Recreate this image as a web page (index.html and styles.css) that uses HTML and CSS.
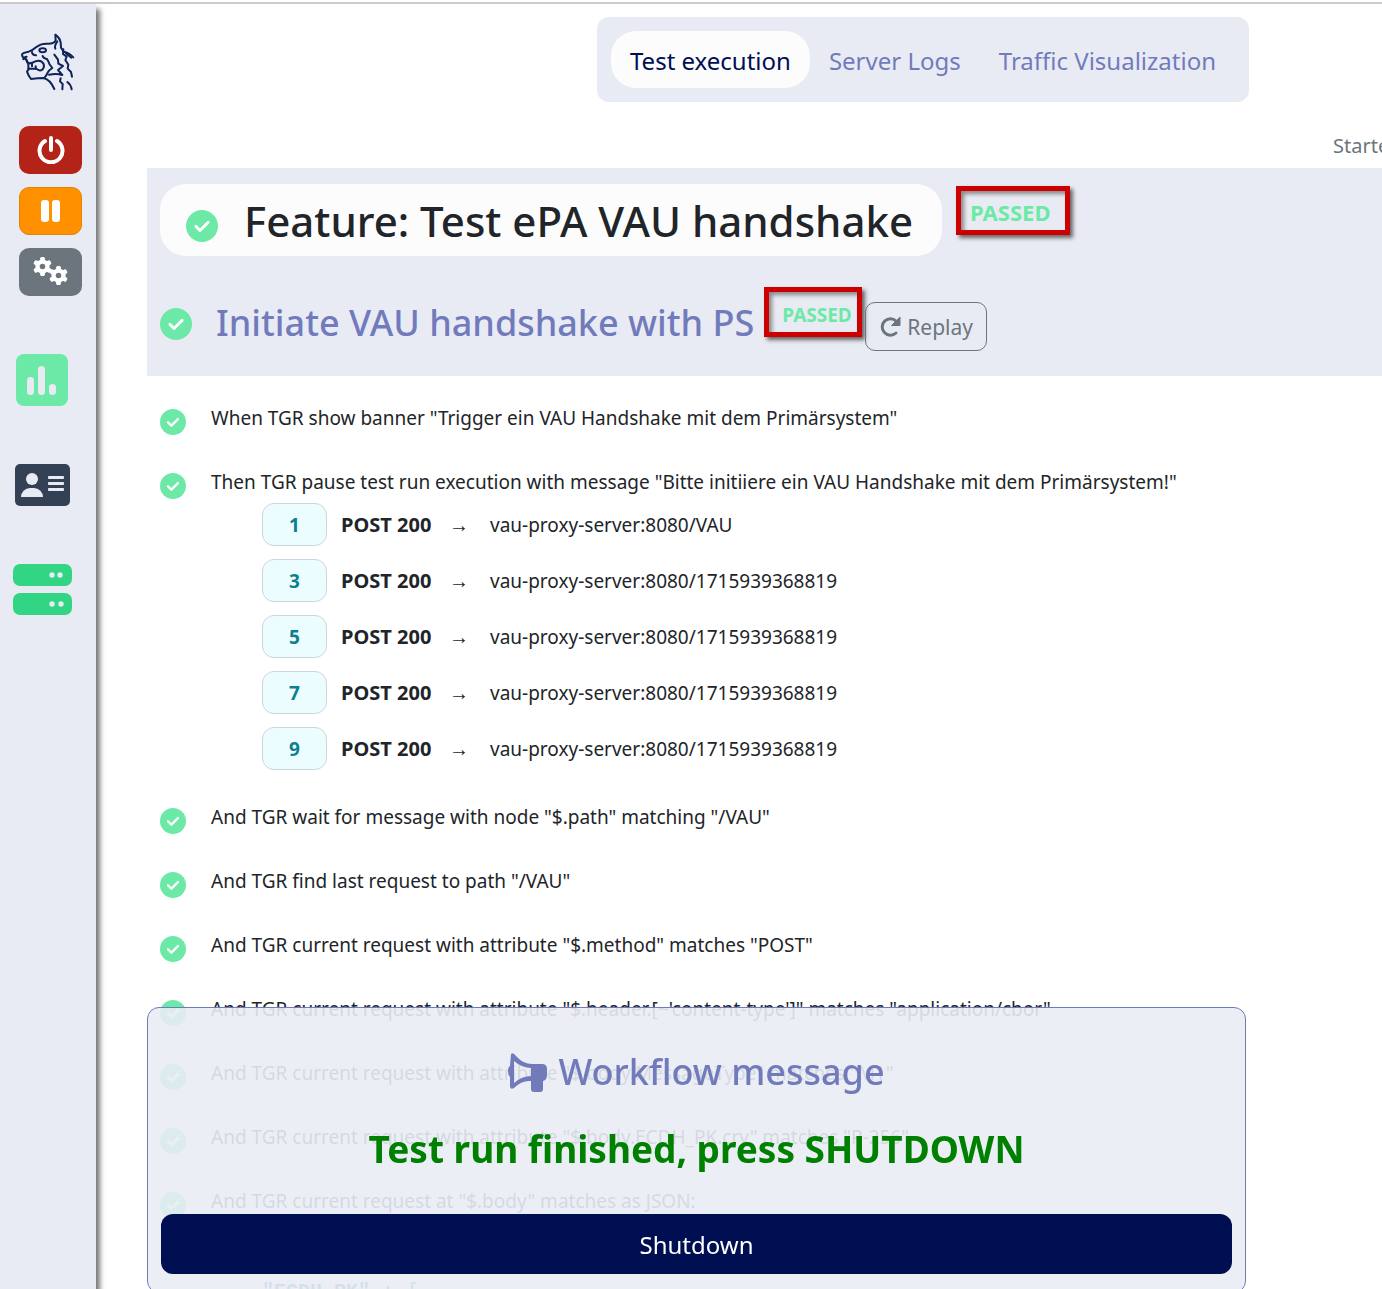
FILE: index.html
```html
<!DOCTYPE html>
<html lang="en">
<head>
<meta charset="utf-8">
<title>Workflow UI</title>
<link rel="stylesheet" href="styles.css">
</head>
<body>
<svg class="sprite" aria-hidden="true">
  <symbol id="check" viewBox="0 0 512 512">
    <circle cx="256" cy="256" r="256" fill="#6ce9a6"/>
    <path d="M158 262l66 66 130-130" fill="none" stroke="#fcfcfd" stroke-width="46" stroke-linecap="round" stroke-linejoin="round"/>
  </symbol>
  <symbol id="gear" viewBox="-12 -12 24 24">
    <g fill="currentColor">
      <rect x="-3" y="-12" width="6" height="24" rx="2"/>
      <rect x="-3" y="-12" width="6" height="24" rx="2" transform="rotate(60)"/>
      <rect x="-3" y="-12" width="6" height="24" rx="2" transform="rotate(120)"/>
      <circle r="9"/>
    </g>
    <circle r="3.500" fill="#6c757d"/>
  </symbol>
</svg>
<div class="shell">
  <aside class="sidebar">
    <svg class="logo" viewBox="60 99 168 174" role="img" aria-label="Tiger">
      <g fill="none" stroke="#0e2358" stroke-width="6" stroke-linecap="round" stroke-linejoin="round">
        <path d="M84 190l-5-12q-12-3-13-14 1-6 20-9 12-4 22-13 14-12 34-11 20 1 25-10l-1-17q14 10 16 24l1 15 8 12q16 3 29 17"/>
        <path d="M80 170q-8 1-10 8M96 156q0 9 12 10M172 124q-10 14-6 22"/>
        <ellipse cx="128" cy="151" rx="10" ry="6"/>
        <path d="M79 181l5 9q13 1 22-6 18-6 25 8 3 9-4 17-9 6-18-3h-22"/>
        <path d="M85 191v14M96 191v8M107 206v-7"/>
        <path d="M87 206l-6 9q4 12 12 22 22-3 38-3 20 5 32 33"/>
        <path d="M128 168q2 8 13 9 7 12 7 15l9 12q-10 6-14 14-3 8-9 14"/>
        <path d="M163 164l11 15 1 12 14 7-15 12 13 15q-18-6-40-1"/>
        <path d="M190 148l-1 14 11 8-4 10 9 14-2 12 10 10 3 14M198 160l16 13"/>
        <path d="M182 235l-2 9 8 8-1 16M202 246q11 8 13 22"/>
      </g>
    </svg>
    <div class="controls">
      <button class="control control-power" aria-label="Shutdown test run">
        <svg width="28" height="28" viewBox="0 0 28 28" fill="none" stroke="currentColor" stroke-width="4" stroke-linecap="round"><path d="M14 2v12M8 5a11.500 11.500 0 1 0 12 0"/></svg>
      </button>
      <button class="control control-pause" aria-label="Pause test run">
        <svg width="20" height="22" viewBox="0 0 20 22" fill="currentColor"><rect width="8" height="22" rx="3"/><rect x="11" width="8" height="22" rx="3"/></svg>
      </button>
      <button class="control control-config" aria-label="Configuration">
        <svg width="36" height="30" viewBox="0 0 36 30"><use href="#gear" width="19" height="19"/><use href="#gear" x="16" y="9" width="19" height="19"/></svg>
      </button>
    </div>
    <nav class="panels" aria-label="Panels">
      <a href="#status" aria-label="Execution status"><svg width="52" height="52" viewBox="0 0 52 52"><rect width="52" height="52" rx="8" fill="#6ce9a6"/><g fill="#e9ebf4"><rect x="11" y="23" width="7" height="18" rx="3.500"/><rect x="22" y="12" width="7" height="29" rx="3.500"/><rect x="33" y="30" width="7" height="11" rx="3.500"/></g></svg></a>
      <a href="#features" aria-label="Features"><svg width="55" height="42" viewBox="0 0 55 42"><rect width="55" height="42" rx="5" fill="#344054"/><g fill="#e9ebf4"><circle cx="17" cy="15" r="6"/><path d="M6 33a9 9 0 0 1 9-9h4a9 9 0 0 1 9 9z"/><rect x="33" y="12" width="16" height="3" rx="1"/><rect x="33" y="18" width="16" height="3" rx="1"/><rect x="33" y="24" width="16" height="3" rx="1"/></g></svg></a>
      <a href="#servers" aria-label="Servers"><svg width="59" height="52" viewBox="0 0 59 52"><g fill="#32d583"><rect width="59" height="22" rx="7"/><rect y="29" width="59" height="22" rx="7"/></g><g fill="#e9ebf4"><circle cx="39" cy="11" r="2.700"/><circle cx="47" cy="11" r="2.700"/><circle cx="39" cy="40" r="2.700"/><circle cx="48" cy="40" r="2.700"/></g></svg></a>
    </nav>
  </aside>

  <main class="main">
    <header class="topbar">
      <nav class="tabs" aria-label="Views">
        <a class="tab tab-active" href="#execution">Test execution</a>
        <a class="tab" href="#logs">Server Logs</a>
        <a class="tab" href="#traffic">Traffic Visualization</a>
      </nav>
    </header>
    <div class="started"><span>Started</span></div>

    <section class="feature">
      <div class="feature-row">
        <h1 class="feature-title"><svg class="icon-lg"><use href="#check"/></svg>Feature: Test ePA VAU handshake</h1>
        <span class="result result-feature">PASSED</span>
      </div>
      <div class="scenario-row">
        <svg class="icon-lg"><use href="#check"/></svg>
        <h2 class="scenario-title">Initiate VAU handshake with PS</h2>
        <span class="result result-scenario">PASSED</span>
        <button class="replay"><svg width="22" height="22" viewBox="0 0 22 22"><path d="M17.500 5.500A8.200 8.200 0 1 0 17 17" fill="none" stroke="currentColor" stroke-width="3" stroke-linecap="round"/><path d="M21 1v8.500h-8.500z" fill="currentColor" stroke="currentColor" stroke-linejoin="round"/></svg>Replay</button>
      </div>
    </section>

    <ol class="steps">
      <li class="step"><svg class="icon-md"><use href="#check"/></svg><p>When TGR show banner "Trigger ein VAU Handshake mit dem Primärsystem"</p></li>
      <li class="step"><svg class="icon-md"><use href="#check"/></svg>
        <div>
          <p>Then TGR pause test run execution with message "Bitte initiiere ein VAU Handshake mit dem Primärsystem!"</p>
          <ul class="requests">
            <li class="request"><button class="number">1</button><b class="method">POST 200</b><span class="arrow">→</span><span>vau-proxy-server:8080/VAU</span></li>
            <li class="request"><button class="number">3</button><b class="method">POST 200</b><span class="arrow">→</span><span>vau-proxy-server:8080/1715939368819</span></li>
            <li class="request"><button class="number">5</button><b class="method">POST 200</b><span class="arrow">→</span><span>vau-proxy-server:8080/1715939368819</span></li>
            <li class="request"><button class="number">7</button><b class="method">POST 200</b><span class="arrow">→</span><span>vau-proxy-server:8080/1715939368819</span></li>
            <li class="request"><button class="number">9</button><b class="method">POST 200</b><span class="arrow">→</span><span>vau-proxy-server:8080/1715939368819</span></li>
          </ul>
        </div>
      </li>
      <li class="step"><svg class="icon-md"><use href="#check"/></svg><p>And TGR wait for message with node "$.path" matching "/VAU"</p></li>
      <li class="step"><svg class="icon-md"><use href="#check"/></svg><p>And TGR find last request to path "/VAU"</p></li>
      <li class="step"><svg class="icon-md"><use href="#check"/></svg><p>And TGR current request with attribute "$.method" matches "POST"</p></li>
      <li class="step"><svg class="icon-md"><use href="#check"/></svg><p>And TGR current request with attribute "$.header.[~'content-type']" matches "application/cbor"</p></li>
      <li class="step"><svg class="icon-md"><use href="#check"/></svg><p>And TGR current request with attribute "$.body.MessageType" matches "M1"</p></li>
      <li class="step"><svg class="icon-md"><use href="#check"/></svg><p>And TGR current request with attribute "$.body.ECDH_PK.crv" matches "P-256"</p></li>
      <li class="step"><svg class="icon-md"><use href="#check"/></svg>
        <div>
          <p>And TGR current request at "$.body" matches as JSON:</p>
          <pre class="json">{
<b>"ECDH_PK"</b> : {</pre>
        </div>
      </li>
    </ol>
  </main>

  <section class="banner" aria-label="Workflow message">
    <h2 class="banner-title"><svg width="40" height="40" viewBox="0 0 40 40"><path d="M3 2q2-2 5 2 8 9 18 8h8q5 0 5 5v6q0 5-4 6v8q0 3-3 3h-6q-3 0-3-3v-8Q14 28 6 36q-4 2-4-2V25q-2-2-2-6t2-5zM6 9v22q8-7 17-7v-8Q14 16 6 9z" fill="currentColor" fill-rule="evenodd"/></svg>Workflow message</h2>
    <p class="banner-text">Test run finished, press SHUTDOWN</p>
    <button class="shutdown">Shutdown</button>
  </section>
</div>
</body>
</html>
```
FILE: styles.css
```css
* {
  box-sizing: border-box;
}

body {
  margin: 0;
  padding-top: 2px;
  height: 100vh;
  overflow: hidden;
  background: #fff;
  color: #212529;
  font-family: "Noto Sans", "Open Sans", sans-serif;
  font-size: 19px;
  line-height: 28px;
}

h1, h2, p, ol, ul, pre {
  margin: 0;
  padding: 0;
}

ol, ul {
  list-style: none;
}

button {
  font-family: inherit;
  cursor: pointer;
}

svg {
  display: block;
  flex: none;
}

.sprite {
  position: absolute;
  width: 0;
  height: 0;
}

.shell {
  display: flex;
  height: 100%;
  border-top: 2px solid #ccc;
}

/* Sidebar */
.sidebar {
  flex: 0 0 96px;
  padding-top: 29px;
  background: #e9ebf4;
  box-shadow: 3px 6px 5px 1px #777;
}

.logo {
  width: 56px;
  height: 58px;
  margin-left: 20px;
}

.controls {
  display: flex;
  flex-direction: column;
  gap: 13px;
  margin: 35px 0 0 19px;
}

.control {
  display: flex;
  align-items: center;
  justify-content: center;
  width: 63px;
  height: 48px;
  padding: 0;
  border: 1px solid transparent;
  border-radius: 10px;
  color: #fff;
}

.control-power {
  background: #b42318;
}

.control-pause {
  background: #ff9000;
  border-color: #e58200;
}

.control-config {
  background: #6c757d;
}

.panels {
  display: flex;
  flex-direction: column;
  align-items: center;
  gap: 58px;
  width: 84px;
  margin-top: 58px;
}

/* Main area */
.main {
  flex: 1;
  min-width: 0;
  padding: 13px 0 0 51px;
  overflow: hidden;
}

.topbar {
  display: flex;
  justify-content: flex-end;
  padding-right: 133px;
}

.tabs {
  display: flex;
  padding: 14px;
  border-radius: 12px;
  background: #e9ebf4;
}

.tab {
  padding: 15px 19px 13px;
  border-radius: 25px;
  color: #717bbc;
  font-size: 24px;
  line-height: 29px;
  text-decoration: none;
  white-space: nowrap;
}

.tab-active {
  background: #fcfcfd;
  color: #000e52;
}

.started {
  display: flex;
  justify-content: flex-end;
  padding: 30px 0 8px;
  color: #6c757d;
  font-size: 20px;
}

.started span {
  width: 49px;
  white-space: nowrap;
}

.feature {
  height: 208px;
  padding: 16px 13px;
  background: #e9ebf4;
}

.feature-row {
  display: flex;
  gap: 14px;
}

.feature-title {
  display: flex;
  align-items: center;
  gap: 26px;
  height: 72px;
  padding: 2px 29px 0 26px;
  border-radius: 26px;
  background: #fcfcfd;
  font-size: 42px;
  font-weight: 500;
  line-height: 60px;
  white-space: nowrap;
}

.icon-lg {
  width: 32px;
  height: 32px;
  margin-top: 10px;
}

.result {
  flex: none;
  border: 5px solid #c00;
  box-shadow: 3px 3px 4px #666, inset 3px 3px 4px #888;
  color: #6ce9a6;
  font-weight: 700;
}

.result-feature {
  width: 114px;
  height: 49px;
  margin-top: 2px;
  padding-left: 9px;
  font-size: 22px;
  line-height: 43px;
}

.scenario-row {
  display: flex;
  align-items: flex-start;
  margin-top: 31px;
}

.scenario-row .icon-lg {
  margin-top: 21px;
}

.scenario-title {
  margin: 12px 10px 0 24px;
  color: #717bbc;
  font-size: 36px;
  font-weight: 500;
  line-height: 48px;
  white-space: nowrap;
}

.result-scenario {
  width: 98px;
  height: 50px;
  padding-left: 13px;
  font-size: 19px;
  line-height: 46px;
}

.replay {
  display: flex;
  align-items: center;
  gap: 6px;
  height: 49px;
  margin: 15px 0 0 3px;
  padding: 0 13px;
  border: 1px solid #6c757d;
  border-radius: 10px;
  background: transparent;
  color: #6c757d;
  font-size: 21px;
}

/* Steps */
.steps {
  padding: 28px 0 0 13px;
}

.step {
  display: flex;
  gap: 25px;
  padding-bottom: 33px;
  white-space: nowrap;
}

.icon-md {
  width: 26px;
  height: 26px;
  margin-top: 5px;
}

.requests {
  display: flex;
  flex-direction: column;
  gap: 13px;
  padding: 7px 0 0 51px;
}

.request {
  display: flex;
  align-items: center;
}

.number {
  width: 65px;
  height: 43px;
  margin-right: 14px;
  padding: 0;
  border: 1px solid #d0d5dd;
  border-radius: 12px;
  background: #ecfdff;
  color: #0e7f90;
  font-size: 19px;
  font-weight: 700;
}

.method {
  width: 92px;
  font-size: 20px;
}

.arrow {
  width: 41px;
  margin-left: 16px;
  font-size: 20px;
}

.json {
  padding: 26px 0 0 51px;
  color: #0e7090;
  font-family: "Liberation Mono", monospace;
  font-size: 20px;
  line-height: 34px;
}

/* Message banner over the step list */
.banner {
  position: fixed;
  right: 136px;
  bottom: -4px;
  left: 147px;
  padding: 38px 13px 18px;
  border: 1px solid #717bbc;
  border-radius: 12px;
  background: rgba(233, 236, 244, 0.9);
  text-align: center;
}

.banner-title {
  display: flex;
  align-items: center;
  justify-content: center;
  gap: 10px;
  color: #717bbc;
  font-size: 36px;
  font-weight: 500;
  line-height: 52px;
}

.banner-text {
  margin: 25px 0 39px;
  color: #008000;
  font-size: 37px;
  font-weight: 700;
  line-height: 52px;
}

.shutdown {
  width: 100%;
  height: 60px;
  border: 0;
  border-radius: 12px;
  background: #000e52;
  color: #fff;
  font-size: 24px;
}
```
